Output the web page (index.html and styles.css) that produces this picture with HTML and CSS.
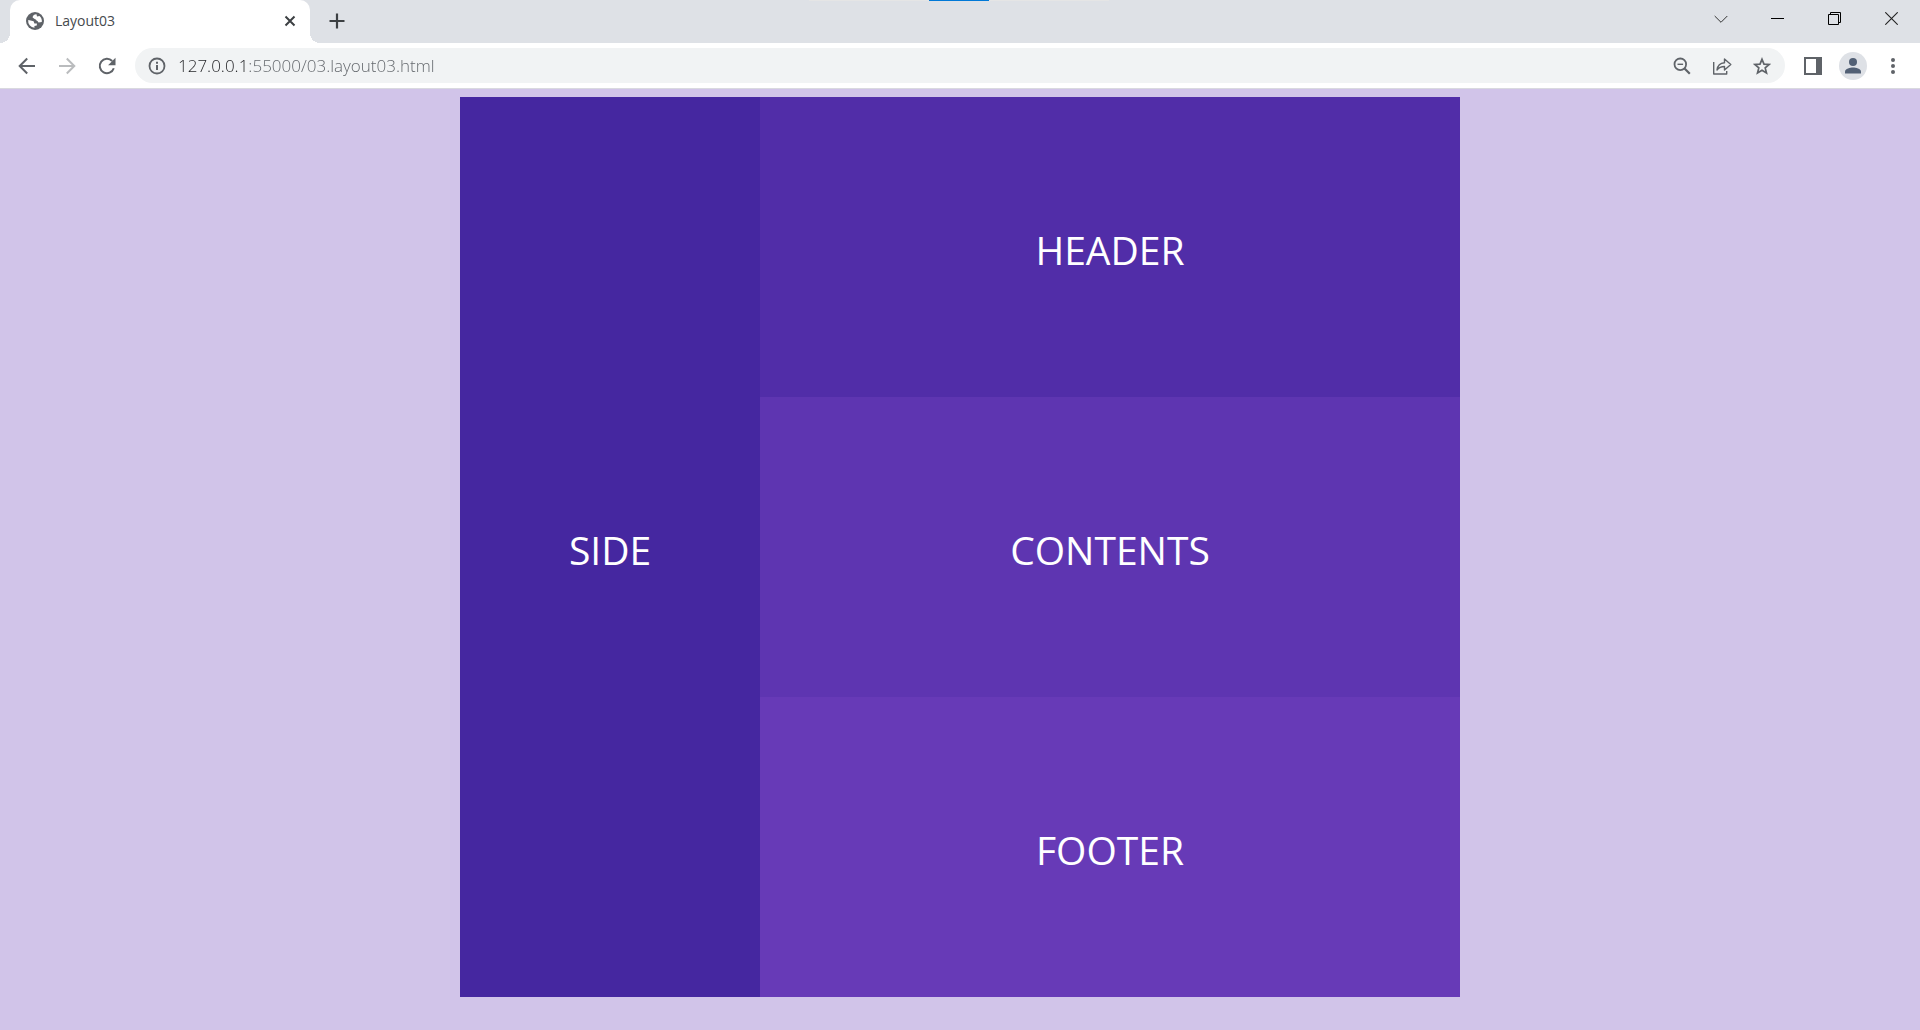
FILE: index.html
```
<!DOCTYPE html>
<html lang="en">

<head>
    <meta charset="UTF-8">
    <meta name="viewport" content="width=device-width, initial-scale=1">
    <title>Layout03</title>
    <link rel="stylesheet" href="styles.css">
</head>

<body>
    <div class="browser">
        <div class="tab-bar">
            <div class="grip"></div>
            <div class="tab">
                <svg class="favicon" width="18" height="18" viewBox="0 0 18 18">
                    <circle cx="9" cy="9" r="9" fill="#5f6368"/>
                    <path d="M10.500 2.200C8 2.400 6.500 3.800 6.600 5.600L9 7.200C10.500 7.200 10 8.800 11.500 9L12.500 10.500 15.800 10A6.900 6.900 0 0 0 13.500 3.900L11 4.600ZM2.200 8A6.900 6.900 0 0 0 8.500 15.800L8.400 14 10.800 13.400 10.900 11.600 8.400 11.400 7.600 9.200 4.600 8.600Z" fill="#fff"/>
                </svg>
                <span class="tab-title">Layout03</span>
                <button class="icon-btn tab-close" aria-label="Close tab">
                    <svg width="12" height="12" viewBox="0 0 12 12"><path d="M1.500 1.500l9 9M10.500 1.500l-9 9" stroke="#3c4043" stroke-width="2"/></svg>
                </button>
            </div>
            <button class="icon-btn new-tab" aria-label="New tab">
                <svg width="16" height="16" viewBox="0 0 16 16"><path d="M8 .5v15M.5 8h15" stroke="#3c4043" stroke-width="2.200"/></svg>
            </button>
            <div class="window-buttons">
                <button class="icon-btn" aria-label="Search tabs">
                    <svg width="14" height="14" viewBox="0 0 14 14"><path d="M.7 4l6.300 6.300L13.300 4" fill="none" stroke="#333"/></svg>
                </button>
                <button class="icon-btn" aria-label="Minimize">
                    <svg width="13" height="13" viewBox="0 0 13 13"><path d="M0 6.500h13" stroke="#000"/></svg>
                </button>
                <button class="icon-btn" aria-label="Restore">
                    <svg width="13" height="13" viewBox="0 0 13 13"><path d="M.5 2.500h10v10H.5zM2.500 2.500v-2h10v10h-2" fill="none" stroke="#000"/></svg>
                </button>
                <button class="icon-btn" aria-label="Close">
                    <svg width="13" height="13" viewBox="0 0 13 13"><path d="M.3.3l12.400 12.400M12.700.3L.3 12.700" stroke="#222" stroke-width="1.100"/></svg>
                </button>
            </div>
        </div>

        <div class="toolbar">
            <button class="icon-btn" aria-label="Back">
                <svg width="18" height="18" viewBox="0 0 18 18"><path d="M17 9H2M9.200 1.500L1.700 9l7.500 7.500" fill="none" stroke="#5f6368" stroke-width="2"/></svg>
            </button>
            <button class="icon-btn" aria-label="Forward">
                <svg width="18" height="18" viewBox="0 0 18 18"><path d="M1 9h15M8.800 1.500L16.300 9l-7.500 7.500" fill="none" stroke="#babcbe" stroke-width="2"/></svg>
            </button>
            <button class="icon-btn" aria-label="Reload">
                <svg width="18" height="18" viewBox="0 0 18 18"><path d="M15.800 11.200A7.200 7.200 0 1 1 14.200 4" fill="none" stroke="#5f6368" stroke-width="2"/><path d="M17.500.8v7.400h-7.400z" fill="#5f6368"/></svg>
            </button>

            <div class="address-bar">
                <svg class="info" width="18" height="18" viewBox="0 0 18 18">
                    <circle cx="9" cy="9" r="7.500" fill="none" stroke="#5f6368" stroke-width="1.800"/>
                    <path d="M9 8v5M9 4.800v2" stroke="#5f6368" stroke-width="2"/>
                </svg>
                <input class="url" type="text" aria-label="Address" value="127.0.0.1:55000/03.layout03.html" spellcheck="false">
                <button class="icon-btn" aria-label="Zoom">
                    <svg width="18" height="18" viewBox="0 0 18 18"><circle cx="7.300" cy="7.300" r="5.800" fill="none" stroke="#5f6368" stroke-width="1.800"/><path d="M11.500 11.500l5.300 5.300" stroke="#5f6368" stroke-width="2.200"/><path d="M4.500 7.300h5.600" stroke="#5f6368" stroke-width="1.400"/></svg>
                </button>
                <button class="icon-btn" aria-label="Share">
                    <svg width="20" height="18" viewBox="0 0 20 18"><path d="M1.700 5v12h13v-3M5 13c.6-4.500 2.800-7 7.500-7.300V2l6.300 5.500-6.300 5.500V9.500C9 9.500 6.900 10.500 5 13z" fill="none" stroke="#5f6368" stroke-width="1.400" stroke-linejoin="round"/></svg>
                </button>
                <button class="icon-btn" aria-label="Bookmark">
                    <svg width="18" height="18" viewBox="0 0 18 18"><path d="M9 2.300l2 4.800 5.200.4-4 3.400 1.300 5.100L9 13.300 4.500 16l1.300-5.100-4-3.400L7 7.100z" fill="none" stroke="#5f6368" stroke-width="1.700"/></svg>
                </button>
            </div>

            <button class="icon-btn" aria-label="Side panel">
                <svg width="18" height="18" viewBox="0 0 18 18"><path d="M0 0h18v18H0zM2 2v14h10V2z" fill="#5f6368" fill-rule="evenodd"/></svg>
            </button>
            <button class="icon-btn" aria-label="Profile">
                <svg width="28" height="28" viewBox="0 0 28 28"><circle cx="14" cy="14" r="14" fill="#dee1e6"/><circle cx="14" cy="10" r="4" fill="#526075"/><path d="M6 21.500v-1.800c0-2.800 5.300-4.100 8-4.100s8 1.300 8 4.100v1.800z" fill="#526075"/></svg>
            </button>
            <button class="icon-btn" aria-label="Menu">
                <svg width="4" height="18" viewBox="0 0 4 18" fill="#5f6368"><circle cx="2" cy="3" r="2"/><circle cx="2" cy="9" r="2"/><circle cx="2" cy="15" r="2"/></svg>
            </button>
        </div>
    </div>

    <div id="wrap">
        <aside id="side">SIDE</aside>
        <header id="header">HEADER</header>
        <main id="contents">CONTENTS</main>
        <footer id="footer">FOOTER</footer>
    </div>
</body>

</html>
```

FILE: styles.css
```
* {
    box-sizing: border-box;
}

body {
    margin: 0;
    background-color: #d1c4e9;
    font-family: "Open Sans", "Noto Sans", sans-serif;
}

/* browser window */
.browser {
    border-bottom: 1px solid #d9d9df;
    background-color: #fff;
}

.tab-bar {
    position: relative;
    display: flex;
    height: 43px;
    padding-left: 10px;
    background-color: #dee1e6;
}

/* drag handle on the top edge */
.grip {
    position: absolute;
    top: 0;
    left: 50%;
    width: 300px;
    height: 1px;
    margin-left: -151px;
    background: linear-gradient(#0078d7, #0078d7) center / 60px 1px no-repeat #e5e5e5;
}

.tab {
    position: relative;
    display: flex;
    align-items: center;
    width: 300px;
    padding: 0 8px 2px 16px;
    border-radius: 10px 10px 0 0;
    background-color: #fff;
}

.tab::before,
.tab::after {
    content: "";
    position: absolute;
    bottom: 0;
    width: 10px;
    height: 10px;
}

.tab::before {
    right: 100%;
    background: radial-gradient(circle at 0 0, transparent 10px, #fff 10px);
}

.tab::after {
    left: 100%;
    background: radial-gradient(circle at 100% 0, transparent 10px, #fff 10px);
}

.tab-title {
    flex: 1;
    margin-left: 11px;
    font-size: 14px;
    color: #45494d;
}

.icon-btn {
    display: flex;
    align-items: center;
    justify-content: center;
    flex: none;
    width: 40px;
    height: 35px;
    padding: 0;
    border: none;
    background: none;
    cursor: pointer;
}

.tab-close {
    width: 24px;
}

.new-tab {
    width: 54px;
    height: 42px;
}

.window-buttons {
    display: flex;
    margin-left: auto;
}

.window-buttons .icon-btn {
    width: 57px;
    height: 37px;
}

.toolbar {
    display: flex;
    align-items: center;
    padding: 5px 7px;
}

.address-bar {
    display: flex;
    align-items: center;
    flex: 1;
    min-width: 0;
    margin: 0 8px;
    padding: 0 3px 0 13px;
    border-radius: 18px;
    background-color: #f1f3f4;
}

.info {
    flex: none;
}

/* the host is darker than the rest of the address */
.url {
    flex: 1;
    min-width: 0;
    margin-left: 12px;
    padding: 0;
    border: none;
    outline: none;
    background: linear-gradient(to right, #202124 71px, #5f6368 71px);
    -webkit-background-clip: text;
    background-clip: text;
    color: transparent;
    font-family: inherit;
    font-size: 17px;
    font-weight: 300;
}

/* layout */
#wrap {
    display: grid;
    grid-template-columns: 3fr 7fr;
    grid-auto-rows: 300px;
    max-width: 1000px;
    margin: 8px auto;
    color: #fff;
    font-size: 39px;
}

#side,
#header,
#contents,
#footer {
    display: flex;
    align-items: center;
    justify-content: center;
    padding-top: 4px;
}

#side {
    grid-row: span 3;
    background-color: #4527a0;
}

#header {
    background-color: #512da8;
}

#contents {
    background-color: #5e35b1;
}

#footer {
    background-color: #673ab7;
}
```
